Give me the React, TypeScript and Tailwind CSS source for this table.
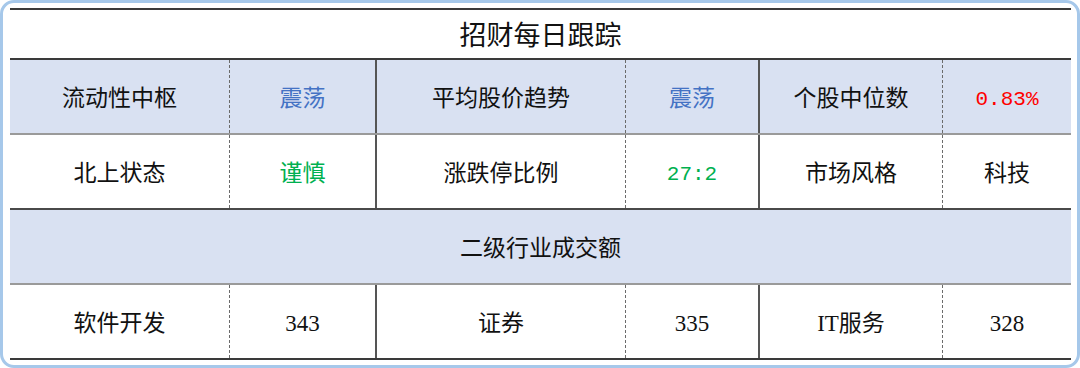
import React from 'react';

type Cell = { text: string; color?: string; mono?: boolean };

const zh = "font-['Liberation_Serif','Noto_Sans_CJK_SC',serif]";
const mono = "font-['Liberation_Mono','Noto_Sans_CJK_SC',monospace]";

const rows: { bg: string; cells: Cell[] }[] = [
  {
    bg: 'bg-[#d9e1f2]',
    cells: [
      { text: '流动性中枢' },
      { text: '震荡', color: 'text-[#4472c4]' },
      { text: '平均股价趋势' },
      { text: '震荡', color: 'text-[#4472c4]' },
      { text: '个股中位数' },
      { text: '0.83%', color: 'text-[#ff0000]', mono: true },
    ],
  },
  {
    bg: 'bg-white',
    cells: [
      { text: '北上状态' },
      { text: '谨慎', color: 'text-[#00b050]' },
      { text: '涨跌停比例' },
      { text: '27:2', color: 'text-[#00b050]', mono: true },
      { text: '市场风格' },
      { text: '科技' },
    ],
  },
];

const sectors: Cell[] = [
  { text: '软件开发' },
  { text: '343' },
  { text: '证券' },
  { text: '335' },
  { text: 'IT服务' },
  { text: '328' },
];

// dividers before each column: none, dashed, solid, dashed, solid, dashed
const divider = [
  '',
  'border-l border-dashed border-[#6b6b6b]',
  'border-l-2 border-solid border-[#555]',
  'border-l border-dashed border-[#6b6b6b]',
  'border-l-2 border-solid border-[#555]',
  'border-l border-dashed border-[#6b6b6b]',
];

function Row({ cells, bg, border }: { cells: Cell[]; bg: string; border: string }) {
  return (
    <div className={`grid grid-cols-[219px_146px_250px_133px_184px_129px] h-[75px] ${bg} ${border}`}>
      {cells.map((c, i) => (
        <div
          key={i}
          className={`flex items-center justify-center pt-[6px] ${divider[i]} ${c.mono ? `${mono} text-[21px]` : `${zh} text-[23px]`} ${c.color ?? 'text-[#111]'}`}
        >
          {c.text}
        </div>
      ))}
    </div>
  );
}

export default function App() {
  return (
    <div className="w-[1080px] h-[368px] bg-white">
      <div className="w-full h-full rounded-[14px] border-[3px] border-[#a6c8ea] pl-[7px] pr-[6px] pt-[5px]">
        <div className="w-[1061px] border-t-2 border-[#3a3a3a]">
          <div className={`h-[50px] flex items-center justify-center pt-[4px] border-b-2 border-[#3a3a3a] ${zh} text-[27px] text-[#111]`}>
            招财每日跟踪
          </div>
          <Row cells={rows[0].cells} bg={rows[0].bg} border="border-b-2 border-[#9a9a9a]" />
          <Row cells={rows[1].cells} bg={rows[1].bg} border="border-b-2 border-[#4a4a4a]" />
          <div className={`h-[75px] flex items-center justify-center pt-[6px] bg-[#d9e1f2] border-b-2 border-[#9a9a9a] ${zh} text-[23px] text-[#111]`}>
            二级行业成交额
          </div>
          <Row cells={sectors} bg="bg-white" border="border-b-2 border-[#3a3a3a]" />
        </div>
      </div>
    </div>
  );
}
